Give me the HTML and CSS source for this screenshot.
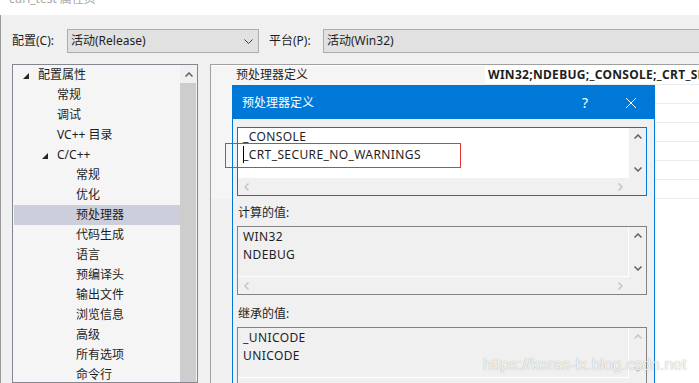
FILE: index.html
```html
<!DOCTYPE html>
<html lang="zh-CN">
<head>
	<meta charset="UTF-8">
	<title>curl_test 属性页</title>
	<link rel="stylesheet" href="styles.css">
</head>
<body>
	<div class="titlebar"><span class="title">curl_test 属性页</span></div>

	<div class="window">
		<div class="config-bar">
			<span class="config-label">配置(C):</span>
			<div class="select select-config">
				<span class="select-text">活动(Release)</span>
				<svg class="select-arrow" width="9" height="5" viewBox="0 0 9 5"><polyline points="0.5,0.5 4.5,4.5 8.5,0.5"/></svg>
			</div>
			<span class="config-label platform-label">平台(P):</span>
			<div class="select select-platform"><span class="select-text">活动(Win32)</span></div>
		</div>

		<div class="main">
			<!-- category tree -->
			<div class="tree">
				<ul class="tree-list">
					<li class="tree-item lvl0"><span class="twist"><svg width="6" height="6" viewBox="0 0 6 6"><polygon points="6,0 6,6 0,6"/></svg></span>配置属性</li>
					<li class="tree-item lvl1"><span class="twist"></span>常规</li>
					<li class="tree-item lvl1"><span class="twist"></span>调试</li>
					<li class="tree-item lvl1"><span class="twist"></span>VC++ 目录</li>
					<li class="tree-item lvl1"><span class="twist"><svg width="6" height="6" viewBox="0 0 6 6"><polygon points="6,0 6,6 0,6"/></svg></span>C/C++</li>
					<li class="tree-item lvl2"><span class="twist"></span>常规</li>
					<li class="tree-item lvl2"><span class="twist"></span>优化</li>
					<li class="tree-item lvl2 selected"><span class="twist"></span>预处理器</li>
					<li class="tree-item lvl2"><span class="twist"></span>代码生成</li>
					<li class="tree-item lvl2"><span class="twist"></span>语言</li>
					<li class="tree-item lvl2"><span class="twist"></span>预编译头</li>
					<li class="tree-item lvl2"><span class="twist"></span>输出文件</li>
					<li class="tree-item lvl2"><span class="twist"></span>浏览信息</li>
					<li class="tree-item lvl2"><span class="twist"></span>高级</li>
					<li class="tree-item lvl2"><span class="twist"></span>所有选项</li>
					<li class="tree-item lvl2"><span class="twist"></span>命令行</li>
				</ul>
				<div class="tree-scroll">
					<div class="scroll-btn"><svg class="chev" width="8" height="5" viewBox="0 0 8 5"><polyline points="0.5,4.5 4,1 7.5,4.5"/></svg></div>
					<div class="scroll-thumb"></div>
				</div>
			</div>

			<!-- property grid -->
			<div class="props">
				<div class="prop-row"><div class="prop-name">预处理器定义</div><div class="prop-value">WIN32;NDEBUG;_CONSOLE;_CRT_SECURE_NO_WARNINGS;%(PreprocessorDefinitions)</div></div>
				<div class="prop-row"><div class="prop-name"></div><div class="prop-value"></div></div>
				<div class="prop-row"><div class="prop-name"></div><div class="prop-value"></div></div>
				<div class="prop-row"><div class="prop-name"></div><div class="prop-value"></div></div>
				<div class="prop-row"><div class="prop-name"></div><div class="prop-value"></div></div>
				<div class="prop-row"><div class="prop-name"></div><div class="prop-value"></div></div>
				<div class="prop-row"><div class="prop-name"></div><div class="prop-value"></div></div>
				<div class="prop-row prop-fill"><div class="prop-name"></div><div class="prop-value"></div></div>
			</div>
		</div>
	</div>

	<!-- edit dialog -->
	<div class="dialog">
		<div class="dialog-title">
			<span class="dialog-caption">预处理器定义</span>
			<span class="title-btn">?</span>
			<span class="title-btn"><svg width="10" height="10" viewBox="0 0 10 10"><path d="M0 0L10 10M10 0L0 10"/></svg></span>
		</div>
		<div class="dialog-body">
			<div class="listbox listbox-edit">
				<div class="listbox-content">
					<div class="line">_CONSOLE</div>
					<div class="line"><span class="caret"></span>_CRT_SECURE_NO_WARNINGS</div>
				</div>
				<div class="vbar">
					<span class="bar-btn"><svg class="chev" width="8" height="5" viewBox="0 0 8 5"><polyline points="0.5,4.5 4,1 7.5,4.5"/></svg></span>
					<span class="bar-btn"><svg class="chev" width="8" height="5" viewBox="0 0 8 5"><polyline points="0.5,0.5 4,4 7.5,0.5"/></svg></span>
				</div>
				<div class="hbar">
					<span class="bar-btn"><svg class="chev off" width="5" height="8" viewBox="0 0 5 8"><polyline points="4.5,0.5 1,4 4.5,7.5"/></svg></span>
					<span class="bar-btn"><svg class="chev off" width="5" height="8" viewBox="0 0 5 8"><polyline points="0.5,0.5 4,4 0.5,7.5"/></svg></span>
				</div>
				<div class="corner"></div>
			</div>

			<div class="field-label">计算的值:</div>
			<div class="listbox listbox-readonly">
				<div class="listbox-content">
					<div class="line">WIN32</div>
					<div class="line">NDEBUG</div>
				</div>
				<div class="vbar">
					<span class="bar-btn"><svg class="chev" width="8" height="5" viewBox="0 0 8 5"><polyline points="0.5,4.5 4,1 7.5,4.5"/></svg></span>
					<span class="bar-btn"><svg class="chev" width="8" height="5" viewBox="0 0 8 5"><polyline points="0.5,0.5 4,4 7.5,0.5"/></svg></span>
				</div>
				<div class="hbar">
					<span class="bar-btn"><svg class="chev off" width="5" height="8" viewBox="0 0 5 8"><polyline points="4.5,0.5 1,4 4.5,7.5"/></svg></span>
					<span class="bar-btn"><svg class="chev off" width="5" height="8" viewBox="0 0 5 8"><polyline points="0.5,0.5 4,4 0.5,7.5"/></svg></span>
				</div>
				<div class="corner"></div>
			</div>

			<div class="field-label field-label-inherited">继承的值:</div>
			<div class="listbox listbox-readonly">
				<div class="listbox-content">
					<div class="line">_UNICODE</div>
					<div class="line">UNICODE</div>
				</div>
				<div class="vbar">
					<span class="bar-btn"><svg class="chev off" width="8" height="5" viewBox="0 0 8 5"><polyline points="0.5,4.5 4,1 7.5,4.5"/></svg></span>
					<span class="bar-btn"><svg class="chev off" width="8" height="5" viewBox="0 0 8 5"><polyline points="0.5,0.5 4,4 7.5,0.5"/></svg></span>
				</div>
				<div class="hbar"></div>
				<div class="corner"></div>
			</div>
		</div>
	</div>

	<div class="annotation"></div>
	<div class="watermark">https://keras-lx.blog.csdn.net</div>
</body>
</html>
```

FILE: styles.css
```css
* { box-sizing: border-box; }
html, body { margin: 0; padding: 0; }
body {
	position: relative;
	width: 699px;
	height: 383px;
	overflow: hidden;
	background: #f0f0f0;
	color: #1e1e1e;
	font: 12px/18px "Noto Sans", "Noto Sans CJK SC", sans-serif;
}

/* window title, scrolled off the top */
.titlebar { height: 15px; background: #fff; overflow: hidden; }
.title { display: block; margin: -9px 0 0 9px; line-height: 16px; color: #a8a8a8; }

.window { display: flex; flex-direction: column; height: 368px; border-left: 1px solid #9a9a9a; }

/* configuration / platform selectors */
.config-bar { display: flex; align-items: center; height: 24px; margin-top: 14px; padding-left: 11px; }
.config-label { flex: none; width: 55px; white-space: nowrap; }
.platform-label { width: 54px; margin-left: 10px; }
.select { display: flex; align-items: center; height: 24px; padding-left: 3px; border: 1px solid #adadad; background: #e1e1e1; }
.select-config { flex: none; width: 192px; padding-right: 5px; }
.select-platform { flex: 1; margin-right: -10px; }
.select-text { flex: 1; }
.select-arrow { fill: none; stroke: #3c3c3c; stroke-width: 1; }

.main { display: flex; flex: 1; min-height: 0; margin-top: 11px; }

/* tree */
.tree { display: flex; flex: none; width: 186px; margin-left: 11px; border: 1px solid #828790; background: #f5f5f5; }
.tree-list { flex: 1; list-style: none; margin: 0; padding: 0 0 0 1px; }
.tree-item { display: flex; align-items: center; height: 20px; white-space: nowrap; }
.tree-item.lvl0 { padding-left: 5px; }
.tree-item.lvl1 { padding-left: 24px; }
.tree-item.lvl2 { padding-left: 43px; }
.tree-item.selected { background: #cccedb; }
.twist { display: flex; align-items: center; flex: none; width: 19px; height: 20px; padding: 2px 0 0 4px; }
.twist svg { fill: #262626; }
.tree-scroll { display: flex; flex-direction: column; flex: none; width: 17px; background: #f0f0f0; }
.scroll-btn { display: flex; align-items: center; justify-content: center; height: 18px; }
.scroll-thumb { flex: 1; margin-right: 1px; background: #cdcdcd; }

.chev { fill: none; stroke: #606060; stroke-width: 1.5; }
.chev.off { stroke: #c4c4c4; }

/* property grid */
.props { display: flex; flex-direction: column; flex: 1; min-width: 0; margin: 0 -20px 0 12px; padding-top: 1px; border-top: 1px solid #a0a0a0; border-left: 1px solid #a0a0a0; background: #fff; }
.prop-row { display: flex; height: 19px; }
.prop-name { flex: none; width: 274px; padding-left: 25px; background: #f5f5f5; white-space: nowrap; }
.prop-value { flex: 1; min-width: 0; padding-left: 3px; border-bottom: 1px solid #ececec; font-weight: bold; letter-spacing: 0.3px; white-space: nowrap; overflow: hidden; }
.prop-fill { flex: 1; }
.prop-fill .prop-name { background: #f0f0f0; }
.prop-fill .prop-value { border: none; }

/* dialog */
.dialog { position: absolute; left: 232px; top: 85px; width: 423px; height: 320px; border: 1px solid #0078d7; background: #f0f0f0; }
.dialog-title { display: flex; align-items: center; height: 33px; background: #0078d7; color: #fff; }
.dialog-caption { flex: 1; padding-left: 9px; }
.title-btn { display: flex; align-items: center; justify-content: center; width: 46px; height: 33px; font-size: 14px; }
.title-btn svg { stroke: #fff; stroke-width: 1; }
.dialog-body { padding: 8px 0 0 4px; }

.listbox {
	display: grid;
	grid-template-columns: 1fr 17px;
	grid-template-rows: 1fr 17px;
	width: 410px;
	height: 69px;
	border: 1px solid #0078d7;
}
.listbox-content { padding-left: 5px; overflow: hidden; white-space: nowrap; }
.listbox-edit .listbox-content { background: #fff; }
.listbox-readonly { border-color: #828282; }
.listbox-readonly .listbox-content { padding-top: 1px; border-right: 1px solid #fff; border-bottom: 1px solid #fff; }
.line { height: 18px; letter-spacing: 0.4px; }
.caret { display: inline-block; width: 1px; height: 17px; margin-right: -1px; vertical-align: -4px; background: #000; }

.vbar { display: flex; flex-direction: column; justify-content: space-between; }
.hbar { display: flex; justify-content: space-between; }
.bar-btn { display: flex; align-items: center; justify-content: center; width: 17px; height: 17px; }

.field-label { margin: 8px 0 4px; padding-left: 1px; }
.field-label-inherited { margin-top: 10px; }

/* screenshot markup */
.annotation { position: absolute; left: 225px; top: 143px; width: 236px; height: 25px; border: 1px solid #e53935; }
.watermark {
	position: absolute;
	left: 483px;
	top: 354px;
	font: 16px/22px "Liberation Sans", sans-serif;
	color: rgba(255, 255, 255, 0.9);
	text-shadow: 0 0 1px rgba(0, 0, 0, 0.4);
	white-space: nowrap;
}
```
